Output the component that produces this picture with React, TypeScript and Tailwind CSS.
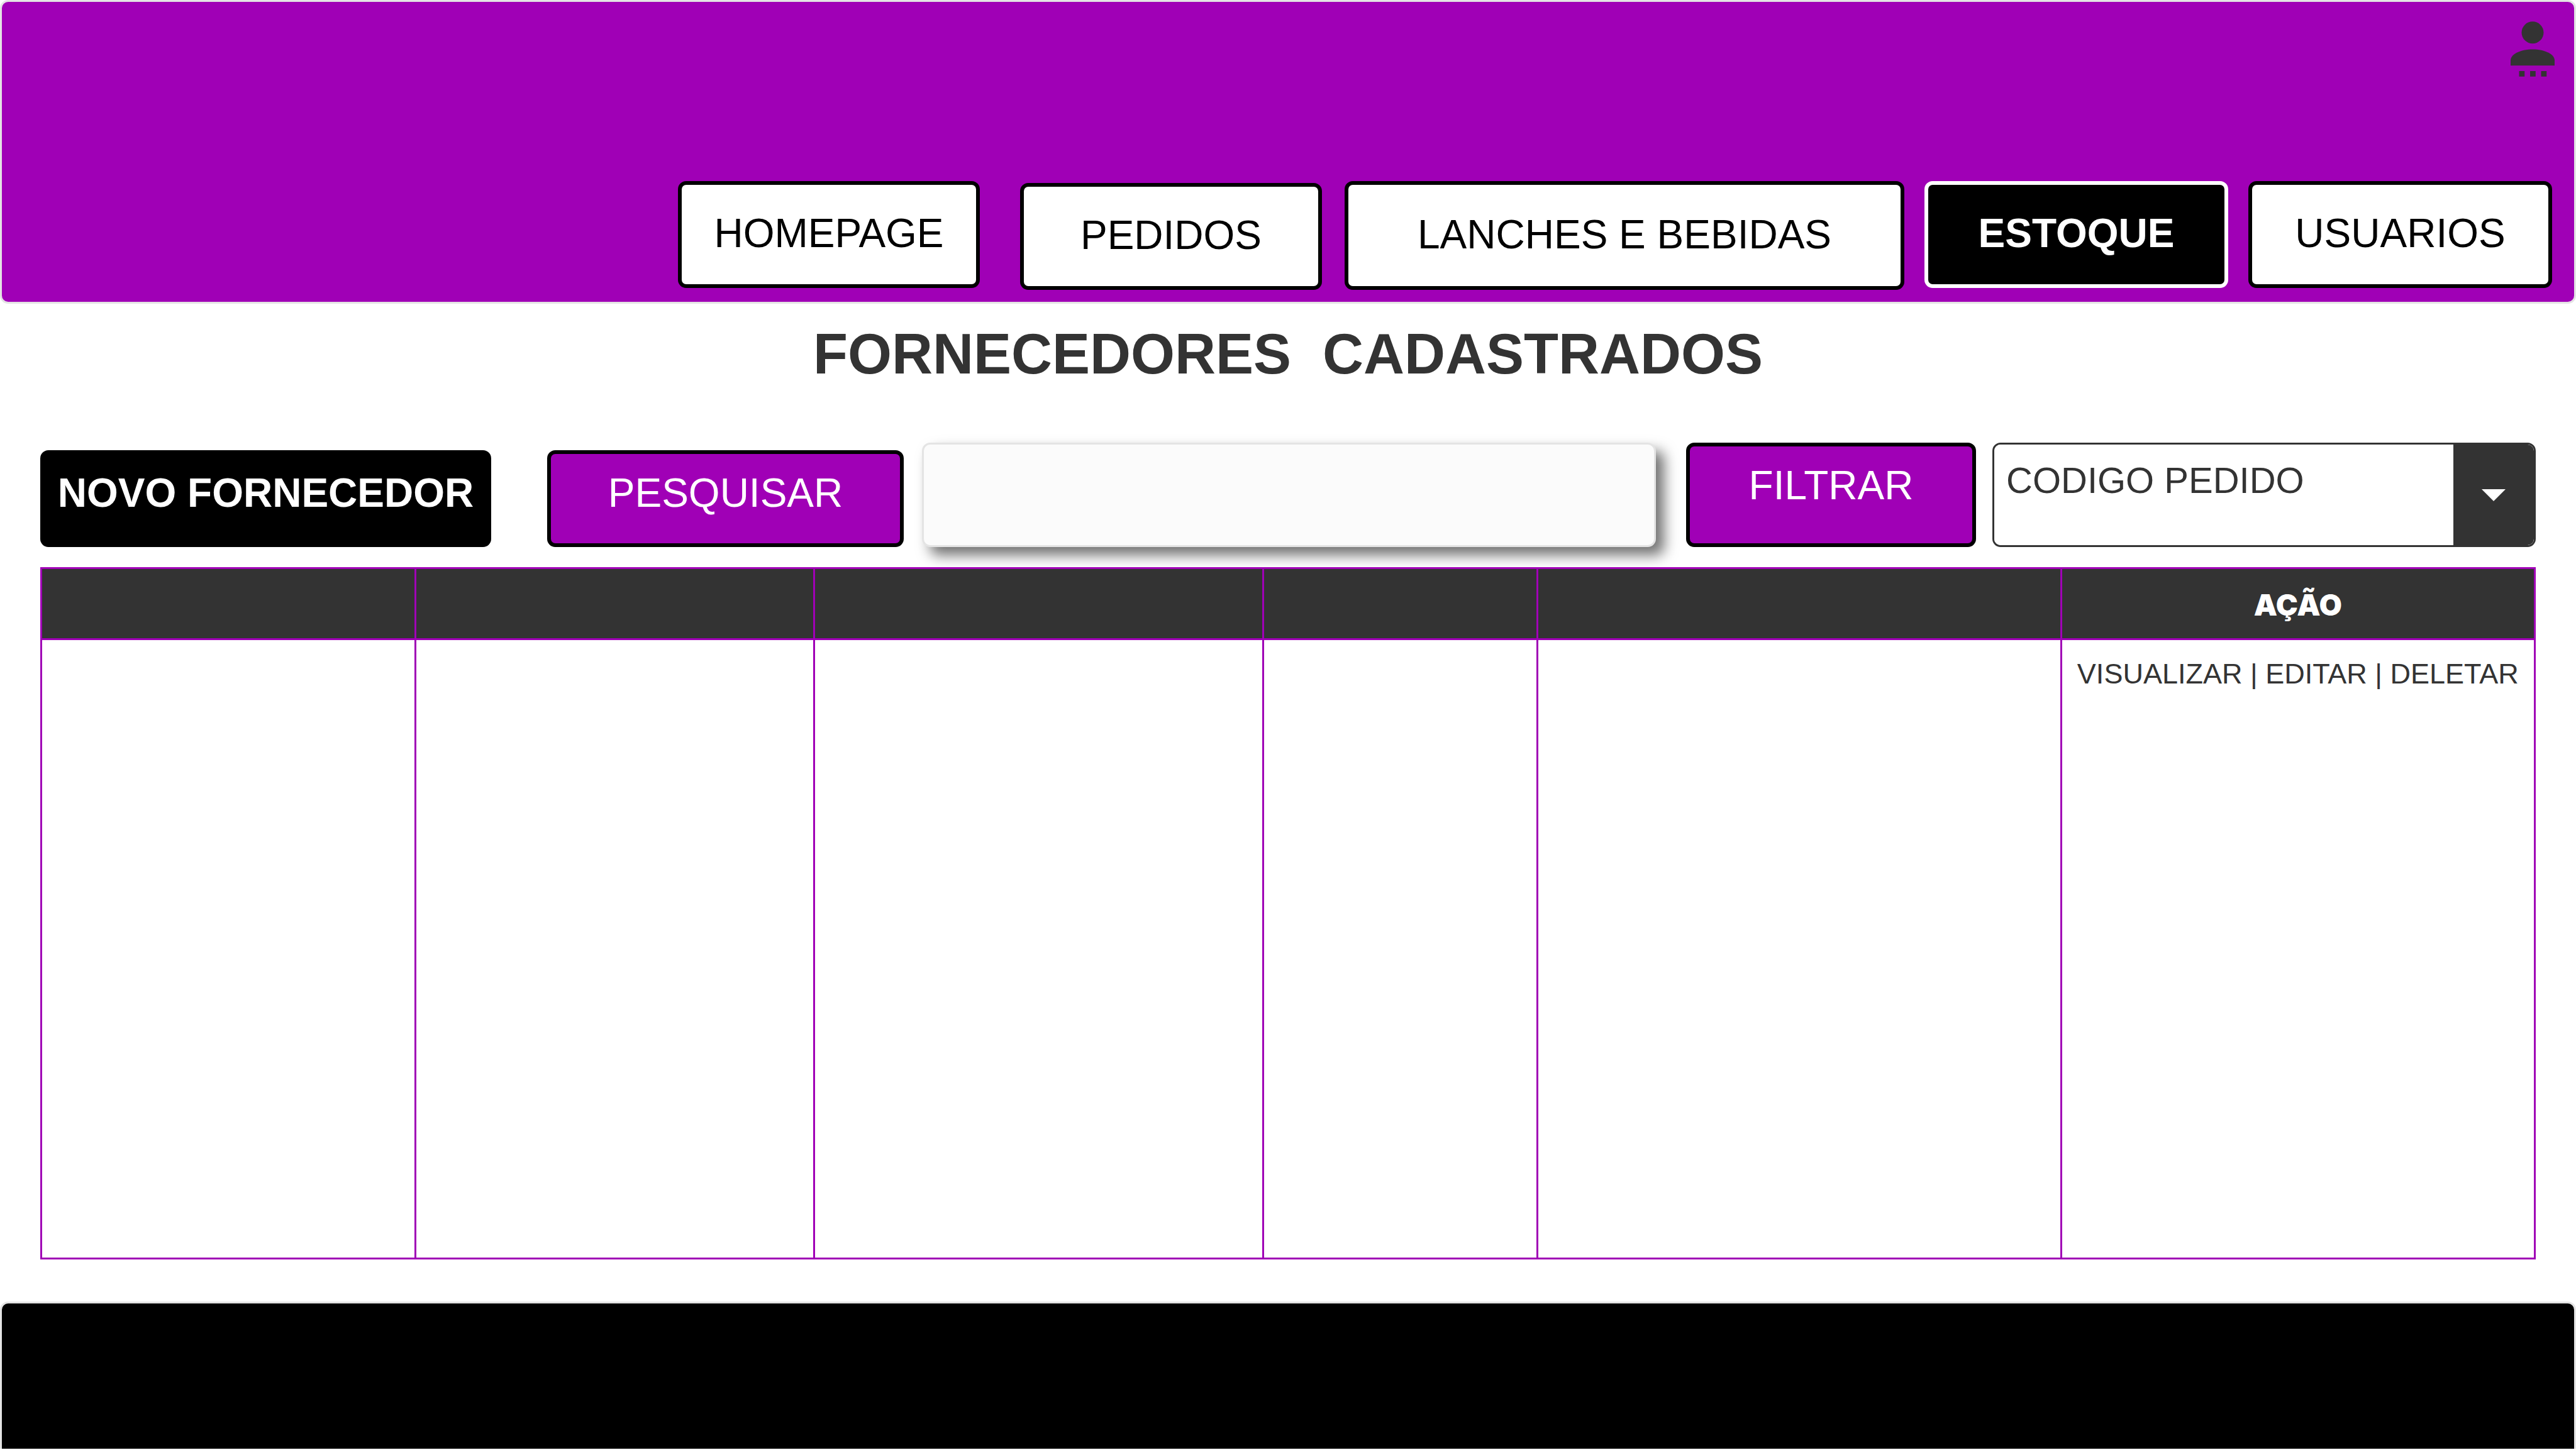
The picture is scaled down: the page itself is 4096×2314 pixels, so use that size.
import React from "react";

type NavItem = { label: string; className: string; active?: boolean };

const navItems: NavItem[] = [
  { label: "HOMEPAGE", className: "h-[170px] w-[480px] mr-8" },
  { label: "PEDIDOS", className: "h-[170px] w-[480px] mr-1 self-end" },
  { label: "LANCHES E BEBIDAS", className: "h-[173px] w-[890px]" },
  { label: "ESTOQUE", className: "h-[170px] w-[483px]", active: true },
  { label: "USUARIOS", className: "h-[170px] w-[483px]" },
];

const columns = [
  { width: "w-[15%]", title: "" },
  { width: "w-[16%]", title: "" },
  { width: "w-[18%]", title: "" },
  { width: "w-[11%]", title: "" },
  { width: "w-[21%]", title: "" },
  { width: "w-[19%]", title: "AÇÃO" },
];

function ProfileIcon() {
  return (
    <svg viewBox="0 0 88 110" className="h-[88px] w-[70px] fill-[#333333]" aria-hidden="true">
      <circle cx="44" cy="22" r="22" />
      <path d="M0 88V77.5C0 65 20 55.5 44 55.5S88 65 88 77.5V88Z" />
      <rect x="17" y="99" width="11" height="11" />
      <rect x="39" y="99" width="11" height="11" />
      <rect x="61" y="99" width="11" height="11" />
    </svg>
  );
}

function Header() {
  return (
    <header className="flex flex-col items-end gap-[166px] rounded-[13px] border-[3px] border-[#e4e4e4] bg-[#a000b6] pt-[31px] pr-[31px] pb-[19px]">
      <button type="button" aria-label="Perfil">
        <ProfileIcon />
      </button>
      <nav className="flex items-start gap-8 pr-1">
        {navItems.map((item) => (
          <a
            key={item.label}
            href="#"
            className={`flex shrink-0 items-center justify-center rounded-[13px] border-[6px] pb-1 text-[64px] leading-[72px] ${
              item.active
                ? "border-white bg-black font-bold text-white"
                : "border-black bg-white text-black"
            } ${item.className}`}
          >
            {item.label}
          </a>
        ))}
      </nav>
    </header>
  );
}

function Toolbar() {
  return (
    <form className="mt-[91px] flex items-end px-16" onSubmit={(e) => e.preventDefault()}>
      <button
        type="button"
        className="mr-[89px] h-[154px] w-[717px] shrink-0 rounded-[13px] bg-black pb-[18px] text-[64px] leading-[72px] font-bold whitespace-nowrap text-white"
      >
        NOVO FORNECEDOR
      </button>
      <button
        type="submit"
        className="mr-[29px] h-[154px] w-[567px] shrink-0 rounded-[13px] border-[6px] border-black bg-[#a000b6] pb-[18px] text-[64px] leading-[72px] text-white"
      >
        PESQUISAR
      </button>
      <input
        type="text"
        aria-label="Pesquisar fornecedor"
        className="mr-12 h-[166px] min-w-0 flex-1 rounded-[13px] border-[3px] border-[#e4e4e4] bg-[#fbfbfb] px-5 text-[58px] text-[#333333] shadow-[13px_13px_21px_rgba(0,0,0,0.56)]"
      />
      <button
        type="button"
        className="mr-[26px] h-[166px] w-[461px] shrink-0 rounded-[13px] border-[6px] border-black bg-[#a000b6] pb-[30px] text-[64px] leading-[72px] text-white"
      >
        FILTRAR
      </button>
      <div className="relative h-[166px] w-[864px] shrink-0 overflow-hidden rounded-[13px] border-[3px] border-[#333333] bg-white">
        <select
          aria-label="Filtrar por"
          className="h-full w-full appearance-none bg-white pr-[131px] pb-12 pl-[19px] text-[58px] text-[#333333]"
        >
          <option>CODIGO PEDIDO</option>
        </select>
        <span className="pointer-events-none absolute inset-y-0 right-0 flex w-[128px] items-center justify-center bg-[#333333]">
          <svg viewBox="0 0 38 19" className="h-[19px] w-[38px] fill-white" aria-hidden="true">
            <path d="M0 0H38L19 19Z" />
          </svg>
        </span>
      </div>
    </form>
  );
}

function SuppliersTable() {
  return (
    <div className="mt-8 px-16">
      <table className="w-full table-fixed border-separate border-spacing-0 border-t-[3px] border-l-[3px] border-[#a000b6] bg-white">
        <thead>
          <tr>
            {columns.map((column, i) => (
              <th
                key={i}
                scope="col"
                className={`h-[113px] border-r-[3px] border-b-[3px] border-[#a000b6] bg-[#333333] px-0 pt-1 pb-0 font-['Inter',sans-serif] text-[47px] leading-[60px] font-black text-white ${column.width}`}
              >
                {column.title}
              </th>
            ))}
          </tr>
        </thead>
        <tbody>
          <tr>
            {columns.map((column, i) => (
              <td
                key={i}
                className="h-[985px] border-r-[3px] border-b-[3px] border-[#a000b6] px-0 pt-6 text-center align-top text-[45px] leading-[60px] whitespace-nowrap text-[#333333]"
              >
                {column.title && (
                  <>
                    <a href="#">VISUALIZAR</a> | <a href="#">EDITAR</a> | <a href="#">DELETAR</a>
                  </>
                )}
              </td>
            ))}
          </tr>
        </tbody>
      </table>
    </div>
  );
}

export default function App() {
  return (
    <div className="flex min-h-screen flex-col bg-white font-['Liberation_Sans',Arial,sans-serif]">
      <Header />
      <main className="flex flex-1 flex-col">
        <h1 className="pt-[30px] text-center text-[90px] leading-[100px] font-bold whitespace-pre text-[#333333]">
          {"FORNECEDORES  CADASTRADOS"}
        </h1>
        <Toolbar />
        <SuppliersTable />
      </main>
      <footer className="mb-[10px] h-[234px] rounded-t-[13px] border-x-[3px] border-t-[3px] border-[#e4e4e4] bg-black" />
    </div>
  );
}
